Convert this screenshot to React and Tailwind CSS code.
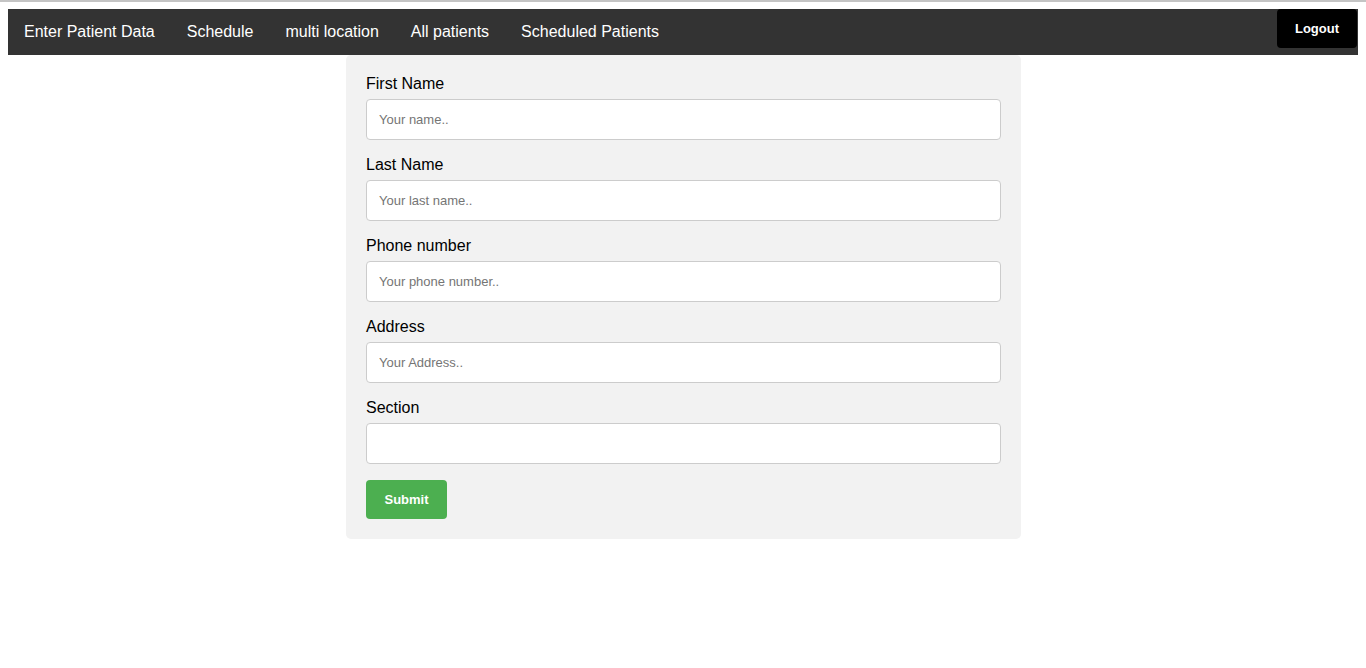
export default function App() {
  const links = ["Enter Patient Data", "Schedule", "multi location", "All patients", "Scheduled Patients"];
  const fields = [
    { label: "First Name", placeholder: "Your name.." },
    { label: "Last Name", placeholder: "Your last name.." },
    { label: "Phone number", placeholder: "Your phone number.." },
    { label: "Address", placeholder: "Your Address.." },
    { label: "Section", placeholder: "" },
  ];

  return (
    <div
      className="min-h-[668px] bg-white border-t-2 border-[#c4c4c4] px-2 pt-[7px]"
      style={{ fontFamily: '"Liberation Sans", Arial, sans-serif' }}
    >
      {/* top nav */}
      <nav className="flex h-[46px] bg-[#333] items-start">
        {links.map((l) => (
          <a key={l} className="px-4 h-[46px] flex items-center text-white text-base cursor-pointer">
            {l}
          </a>
        ))}
        <button className="ml-auto mr-px w-[80px] h-[39px] bg-black text-white text-[13px] font-bold rounded">
          Logout
        </button>
      </nav>

      <div className="w-[675px] ml-[338px] bg-[#f2f2f2] rounded-[5px] p-5">
        {fields.map((f, i) => (
          <div key={f.label} className={i === 0 ? "" : "mt-4"}>
            <label className="block text-base leading-[18px] text-black">{f.label}</label>
            <input
              type="text"
              placeholder={f.placeholder}
              className="block w-full h-[41px] mt-[6px] px-3 bg-white border border-[#ccc] rounded text-[13px] placeholder:text-[#757575] outline-none"
            />
          </div>
        ))}
        <button className="mt-4 w-[81px] h-[39px] bg-[#4CAF50] text-white text-[13px] font-bold rounded">
          Submit
        </button>
      </div>
    </div>
  );
}
